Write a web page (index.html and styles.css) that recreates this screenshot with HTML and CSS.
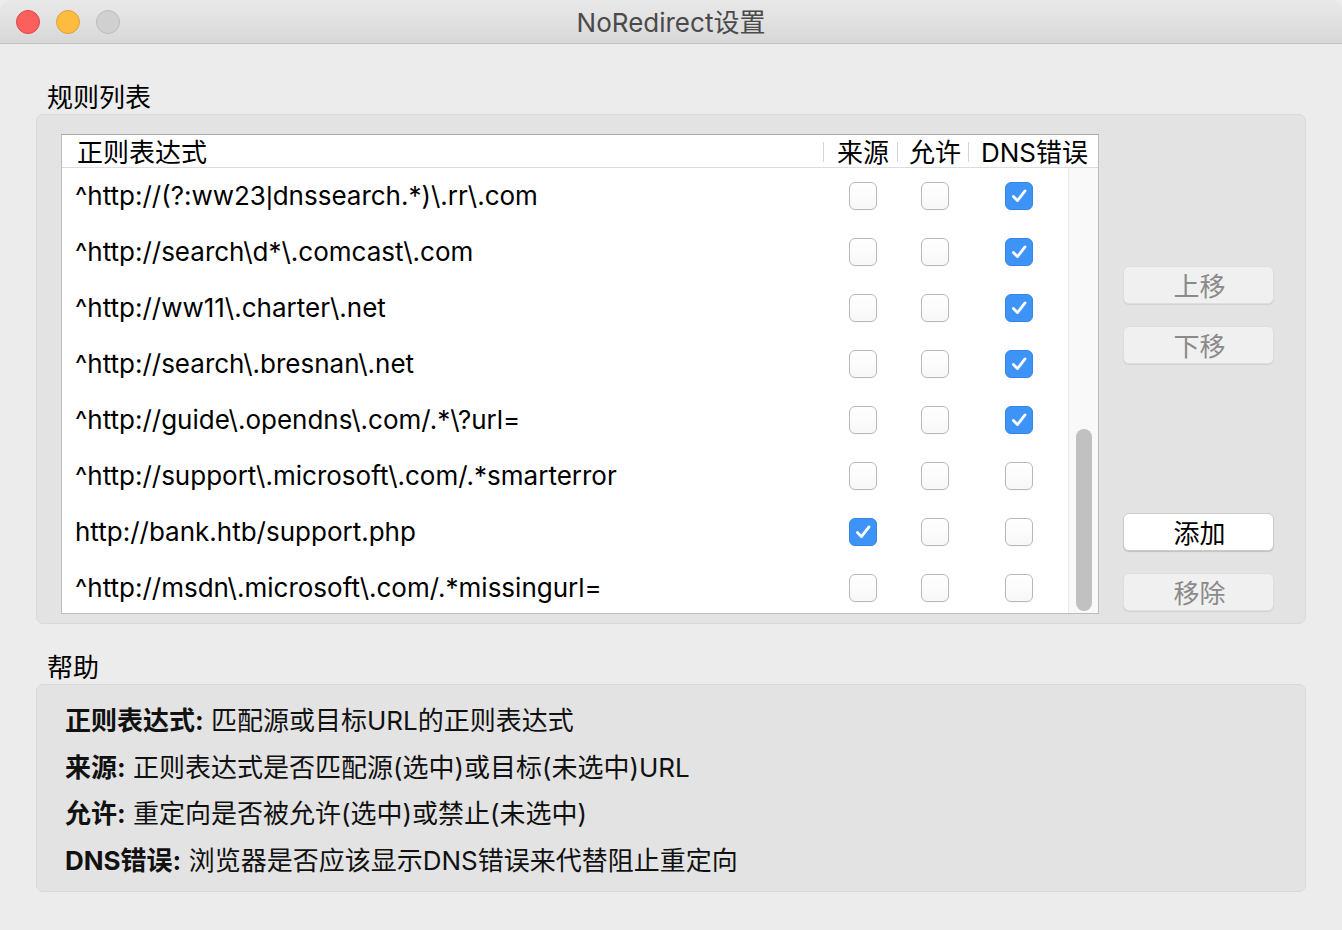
FILE: index.html
```html
<!DOCTYPE html>
<html>
<head>
<meta charset="utf-8">
<link rel="stylesheet" href="styles.css">
</head>
<body>
<div class="titlebar">
  <div class="lights">
    <span class="light red"></span>
    <span class="light yellow"></span>
    <span class="light gray"></span>
  </div>
  <div class="title">NoRedirect设置</div>
</div>
<div class="content">
  <div class="section-label">规则列表</div>
  <div class="group">
    <div class="table">
      <div class="thead">
        <div class="th th-main">正则表达式</div>
        <div class="th th-col c1">来源</div>
        <div class="th th-col c2">允许</div>
        <div class="th th-col c3">DNS错误</div>
      </div>
      <div class="tbody">
        <div class="rows">
          <div class="row"><div class="cell-main">^http://(?:ww23<span class="pipe">|</span>dnssearch.*)\.rr\.com</div><div class="cell c1"><span class="cb"></span></div><div class="cell c2"><span class="cb"></span></div><div class="cell c3"><span class="cb on"><svg viewBox="0 0 28 28"><path d="M8 14.5 L12.3 19 L20.5 8.5"/></svg></span></div></div>
          <div class="row"><div class="cell-main">^http://search\d*\.comcast\.com</div><div class="cell c1"><span class="cb"></span></div><div class="cell c2"><span class="cb"></span></div><div class="cell c3"><span class="cb on"><svg viewBox="0 0 28 28"><path d="M8 14.5 L12.3 19 L20.5 8.5"/></svg></span></div></div>
          <div class="row"><div class="cell-main">^http://ww11\.charter\.net</div><div class="cell c1"><span class="cb"></span></div><div class="cell c2"><span class="cb"></span></div><div class="cell c3"><span class="cb on"><svg viewBox="0 0 28 28"><path d="M8 14.5 L12.3 19 L20.5 8.5"/></svg></span></div></div>
          <div class="row"><div class="cell-main">^http://search\.bresnan\.net</div><div class="cell c1"><span class="cb"></span></div><div class="cell c2"><span class="cb"></span></div><div class="cell c3"><span class="cb on"><svg viewBox="0 0 28 28"><path d="M8 14.5 L12.3 19 L20.5 8.5"/></svg></span></div></div>
          <div class="row"><div class="cell-main">^http://guide\.opendns\.com/.*\?url=</div><div class="cell c1"><span class="cb"></span></div><div class="cell c2"><span class="cb"></span></div><div class="cell c3"><span class="cb on"><svg viewBox="0 0 28 28"><path d="M8 14.5 L12.3 19 L20.5 8.5"/></svg></span></div></div>
          <div class="row"><div class="cell-main">^http://support\.microsoft\.com/.*smarterror</div><div class="cell c1"><span class="cb"></span></div><div class="cell c2"><span class="cb"></span></div><div class="cell c3"><span class="cb"></span></div></div>
          <div class="row"><div class="cell-main">http://bank.htb/support.php</div><div class="cell c1"><span class="cb on"><svg viewBox="0 0 28 28"><path d="M8 14.5 L12.3 19 L20.5 8.5"/></svg></span></div><div class="cell c2"><span class="cb"></span></div><div class="cell c3"><span class="cb"></span></div></div>
          <div class="row"><div class="cell-main">^http://msdn\.microsoft\.com/.*missingurl=</div><div class="cell c1"><span class="cb"></span></div><div class="cell c2"><span class="cb"></span></div><div class="cell c3"><span class="cb"></span></div></div>
        </div>
        <div class="scrollbar"><div class="thumb"></div></div>
      </div>
    </div>
    <div class="buttons">
      <div class="btn-group">
        <button class="btn disabled">上移</button>
        <button class="btn disabled">下移</button>
      </div>
      <div class="btn-group bottom">
        <button class="btn primary">添加</button>
        <button class="btn disabled">移除</button>
      </div>
    </div>
  </div>
  <div class="section-label help-label">帮助</div>
  <div class="help">
    <div class="help-line"><b>正则表达式:</b> 匹配源或目标URL的正则表达式</div>
    <div class="help-line"><b>来源:</b> 正则表达式是否匹配源(选中)或目标(未选中)URL</div>
    <div class="help-line"><b>允许:</b> 重定向是否被允许(选中)或禁止(未选中)</div>
    <div class="help-line"><b>DNS错误:</b> 浏览器是否应该显示DNS错误来代替阻止重定向</div>
  </div>
</div>
</body>
</html>
```

FILE: styles.css
```css
* { box-sizing: border-box; }
html, body {
  margin: 0;
  padding: 0;
  background: #ececec;
  font-family: "Inter", "Liberation Sans", "Noto Sans CJK SC", sans-serif;
  color: #000;
  width: 1342px;
  height: 930px;
  overflow: hidden;
}
.titlebar {
  height: 44px;
  background: linear-gradient(#e9e9e9, #d8d8d8);
  border-bottom: 1px solid #c2c2c2;
  border-radius: 10px 10px 0 0;
  display: flex;
  align-items: center;
  position: relative;
}
.lights {
  display: flex;
  gap: 16px;
  padding-left: 16px;
}
.light {
  width: 24px;
  height: 24px;
  border-radius: 50%;
  display: block;
}
.light.red { background: #fc605c; border: 1px solid #e0463f; }
.light.yellow { background: #fdbc40; border: 1px solid #dfa03a; }
.light.gray { background: #d0d0d0; border: 1px solid #bdbdbd; }
.title {
  position: absolute;
  left: 0;
  right: 0;
  top: 0;
  bottom: 2px;
  display: flex;
  align-items: center;
  justify-content: center;
  font-size: 26px;
  color: #4a4a4a;
}
.content {
  padding: 0 36px;
}
.section-label {
  font-size: 26px;
  line-height: 32px;
  padding-left: 11px;
  margin-top: 38px;
  height: 32px;
}
.help-label {
  margin-top: 28px;
}
.group {
  height: 510px;
  background: #e3e3e3;
  border: 1px solid #dadada;
  border-radius: 7px;
  display: flex;
  padding: 19px 31px 8px 24px;
}
.table {
  width: 1038px;
  height: 480px;
  border: 1px solid #bcbcbc;
  border-top-color: #a9a9a9;
  background: #fff;
  display: flex;
  flex-direction: column;
  overflow: hidden;
}
.thead {
  height: 33px;
  border-bottom: 1px solid #dcdcdc;
  display: flex;
  align-items: center;
  font-size: 26px;
  flex: none;
}
.th { line-height: 32px; height: 32px; white-space: nowrap; padding-top: 2px; }
.th-main { width: 761px; padding-left: 15px; }
.th-col { position: relative; padding-left: 14px; }
.th-col::before {
  content: "";
  position: absolute;
  left: 0;
  top: 7px;
  height: 20px;
  border-left: 1px solid #d4d4d4;
}
.th.c1 { width: 74px; }
.th.c2 { width: 71px; padding-left: 12px; }
.th.c3 { flex: 1; padding-left: 13px; }
.tbody {
  flex: 1;
  display: flex;
  min-height: 0;
}
.rows {
  width: 1006px;
  overflow: hidden;
}
.row {
  height: 55.9px;
  display: flex;
  align-items: center;
  padding-top: 1px;
}
.cell-main {
  width: 761px;
  padding-left: 13px;
  font-size: 26px;
  line-height: 32px;
  height: 32px;
  white-space: nowrap;
}
.pipe {
  font-family: "Liberation Sans", sans-serif;
  line-height: 1;
}
.cell {
  display: flex;
  align-items: center;
  justify-content: center;
}
.cell.c1 { width: 74px; padding-left: 5px; }
.cell.c2 { width: 71px; padding-left: 4px; }
.cell.c3 { width: 100px; padding-left: 2px; }
.cb {
  width: 28px;
  height: 28px;
  border-radius: 6px;
  border: 1px solid #b8b8b8;
  background: linear-gradient(#ffffff, #f7f7f7);
  box-shadow: 0 0.5px 0.5px rgba(0,0,0,0.06);
  display: flex;
  align-items: center;
  justify-content: center;
}
.cb.on {
  background: #3d94f6;
  border-color: #3386ea;
}
.cb svg { width: 28px; height: 28px; }
.cb svg path {
  fill: none;
  stroke: #fff;
  stroke-width: 3;
  stroke-linecap: round;
  stroke-linejoin: round;
}
.scrollbar {
  width: 30px;
  background: #f9f9f9;
  border-left: 1px solid #ececec;
  display: flex;
  flex-direction: column;
  justify-content: flex-end;
  padding: 0 6px 2px 7px;
}
.thumb {
  height: 182px;
  border-radius: 8px;
  background: #c1c1c1;
}
.buttons {
  margin-left: 24px;
  width: 151px;
  display: flex;
  flex-direction: column;
  justify-content: space-between;
  padding-top: 132px;
  padding-bottom: 4px;
}
.btn-group {
  display: flex;
  flex-direction: column;
  gap: 22px;
}
.btn {
  width: 151px;
  height: 38px;
  border-radius: 6px;
  font-family: "Inter", "Liberation Sans", "Noto Sans CJK SC", sans-serif;
  font-size: 26px;
  line-height: 36px;
  padding: 2px 0 0 2px;
  text-align: center;
}
.btn.disabled {
  background: #f0f0f0;
  color: #8a8a8a;
  border: 1px solid #dedede;
  box-shadow: 0 1px 1px rgba(0,0,0,0.08);
}
.btn.primary {
  background: #fff;
  color: #000;
  border: 1px solid #cbcbcb;
  box-shadow: 0 1px 1px rgba(0,0,0,0.15);
}
.help {
  height: 208px;
  background: #e3e3e3;
  border: 1px solid #dadada;
  border-radius: 7px;
  padding: 13px 28px 6px 28px;
}
.help-line {
  font-size: 26px;
  line-height: 46.7px;
  white-space: nowrap;
  color: #111;
}
.help-line b { font-weight: 700; }
```
